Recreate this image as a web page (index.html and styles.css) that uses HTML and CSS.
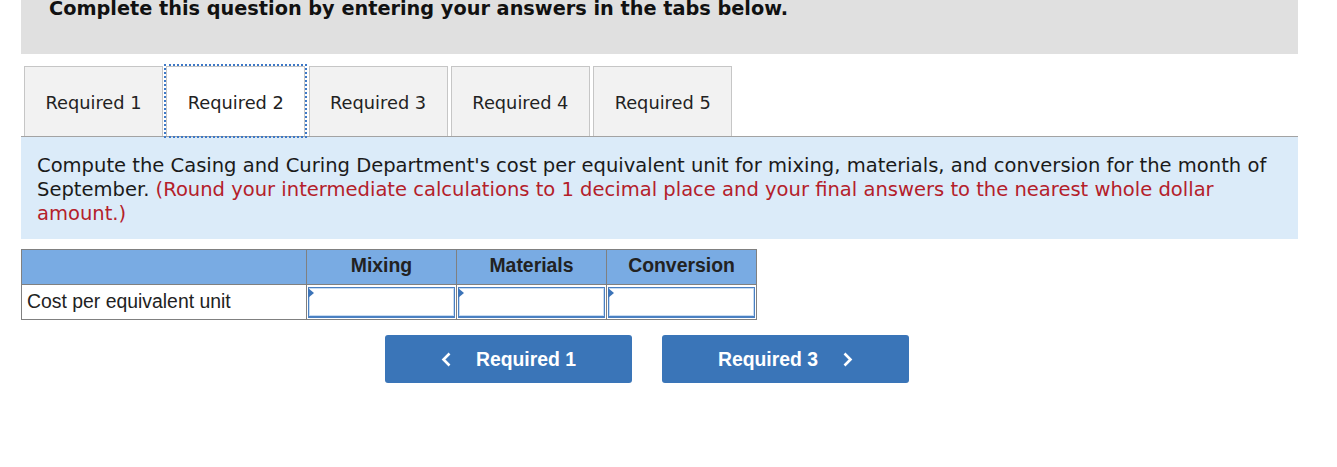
FILE: index.html
```html
<!DOCTYPE html>
<html>
<head>
  <link rel="stylesheet" href="styles.css">
</head>
<body>
  <div class="page">
    <div class="banner">
      <div class="banner-title">Complete this question by entering your answers in the tabs below.</div>
    </div>

    <div class="tabs">
      <div class="tab">Required 1</div>
      <div class="tab active">Required 2</div>
      <div class="tab">Required 3</div>
      <div class="tab">Required 4</div>
      <div class="tab">Required 5</div>
    </div>

    <div class="prompt">
      Compute the Casing and Curing Department's cost per equivalent unit for mixing, materials, and conversion for the month of<br>
      September. <span class="hint">(Round your intermediate calculations to 1 decimal place and your final answers to the nearest whole dollar<br>
      amount.)</span>
    </div>

    <table class="answers">
      <tr>
        <th class="label-col"></th>
        <th>Mixing</th>
        <th>Materials</th>
        <th>Conversion</th>
      </tr>
      <tr>
        <td class="label">Cost per equivalent unit</td>
        <td class="cell"><div class="entry"><span class="flag"></span></div></td>
        <td class="cell"><div class="entry"><span class="flag"></span></div></td>
        <td class="cell"><div class="entry"><span class="flag"></span></div></td>
      </tr>
    </table>

    <div class="nav">
      <button class="nav-btn">
        <svg width="11" height="15" viewBox="0 0 11 15"><polyline points="8.5,1.5 2.5,7.5 8.5,13.5" fill="none" stroke="#fff" stroke-width="2.6"/></svg>
        <span>Required 1</span>
      </button>
      <button class="nav-btn">
        <span>Required 3</span>
        <svg width="11" height="15" viewBox="0 0 11 15"><polyline points="2.5,1.5 8.5,7.5 2.5,13.5" fill="none" stroke="#fff" stroke-width="2.6"/></svg>
      </button>
    </div>
  </div>
</body>
</html>
```

FILE: styles.css
```css
body {
  margin: 0;
  padding: 0;
  background-color: #ffffff;
}

.page {
  margin-left: 21px;
  width: 1277px;
}

.banner {
  height: 54px;
  background-color: #e0e0e0;
}

.banner-title {
  padding-left: 28px;
  font-family: "DejaVu Sans", Verdana, sans-serif;
  font-weight: bold;
  font-size: 19.3px;
  line-height: 17px;
  color: #111111;
}

.tabs {
  display: flex;
  margin-top: 12px;
  padding-left: 3px;
  border-bottom: 1px solid #a3a3a3;
}

.tab {
  width: 139px;
  height: 70px;
  box-sizing: border-box;
  margin-right: 3.3px;
  border: 1px solid #c6c6c6;
  border-bottom: none;
  background-color: #f2f2f2;
  display: flex;
  justify-content: center;
  align-items: center;
  padding-top: 2px;
  font-family: "DejaVu Sans", Verdana, sans-serif;
  font-size: 17.8px;
  color: #222222;
}

.tab.active {
  background-color: #ffffff;
  outline: 2px dotted #3d78c6;
}

.prompt {
  background-color: #dbebf9;
  padding: 17px 16px 13px 16px;
  font-family: "DejaVu Sans", Verdana, sans-serif;
  font-size: 19.55px;
  line-height: 24px;
  color: #1a1a1a;
}

.hint {
  color: #b4202a;
}

.answers {
  margin-top: 10px;
  border-collapse: collapse;
  font-family: "Liberation Sans", Arial, sans-serif;
  font-size: 19.4px;
  color: #222222;
}

.answers th,
.answers td {
  border: 1px solid #808080;
  height: 32px;
  padding: 0;
}

.answers th {
  width: 149px;
  background-color: #79abe3;
  font-weight: bold;
  text-align: center;
  vertical-align: top;
  padding-top: 4px;
  height: 30px;
}

.answers th.label-col {
  width: 284px;
}

.answers td.label {
  padding-left: 5px;
  padding-bottom: 1px;
}

.answers td.cell {
  padding: 1px;
}

.entry {
  position: relative;
  height: 31px;
  box-sizing: border-box;
  border: 1px solid #4a80c2;
  border-bottom-width: 2px;
  box-shadow: inset 0 0 0 1px #c9dcf1;
  background-color: #ffffff;
}

.flag {
  position: absolute;
  left: -1px;
  top: 0;
  width: 0;
  height: 0;
  border-top: 5px solid transparent;
  border-bottom: 5px solid transparent;
  border-left: 6px solid #3d74b8;
}

.nav {
  display: flex;
  justify-content: center;
  gap: 30px;
  margin-top: 15px;
  padding-right: 25px;
}

.nav-btn {
  width: 247px;
  height: 48px;
  border: none;
  border-radius: 3px;
  background-color: #3a75b8;
  color: #ffffff;
  font-family: "Liberation Sans", Arial, sans-serif;
  font-weight: bold;
  font-size: 19.4px;
  display: flex;
  justify-content: center;
  align-items: center;
  gap: 24px;
  cursor: pointer;
}
```
